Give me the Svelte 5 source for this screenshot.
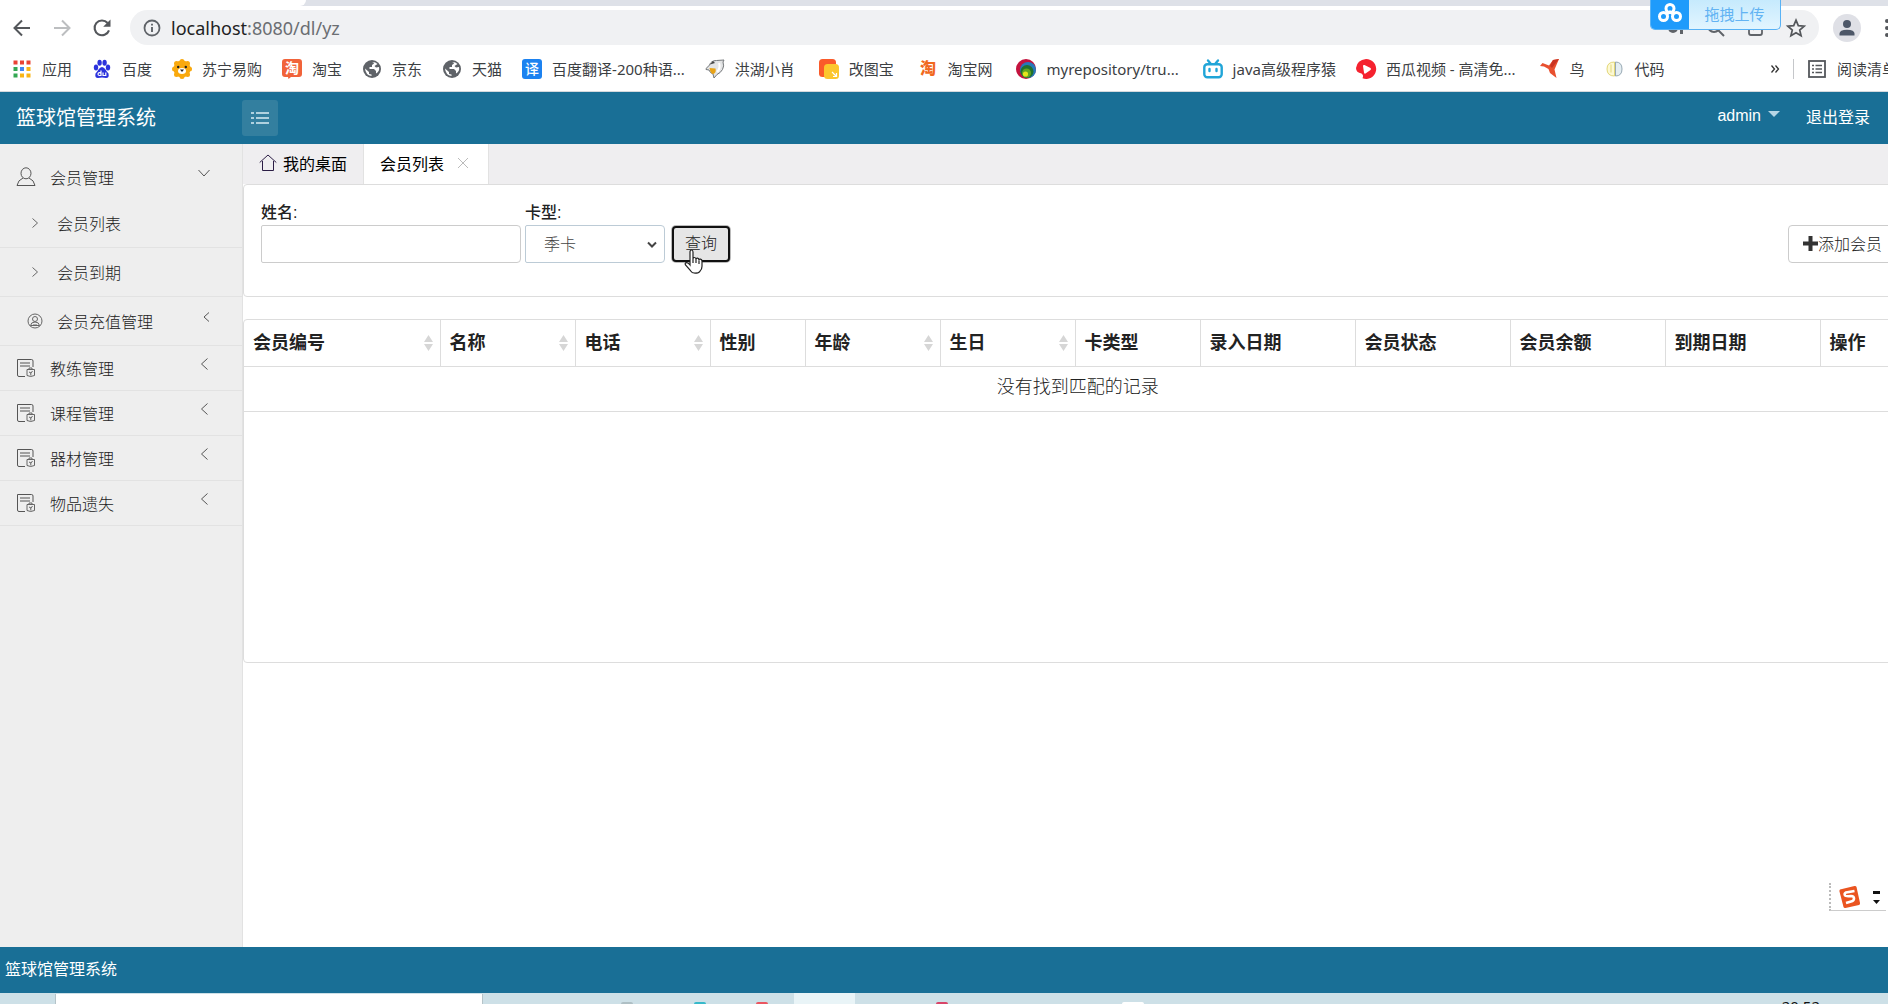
<script>
  let name = '';
  let cardType = '季卡';
  let openMenu = true;

  const cardTypes = ['季卡', '月卡', '年卡'];

  // trailing blanks are part of the saved bookmark titles
  const bookmarks = [
    { icon: 'apps', title: '应用' },
    { icon: 'baidu', title: '百度' },
    { icon: 'suning', title: '苏宁易购' },
    { icon: 'taobao', title: '淘宝' },
    { icon: 'globe', title: '京东' },
    { icon: 'globe', title: '天猫' },
    { icon: 'fanyi', title: '百度翻译-200种语...' },
    { icon: 'dolphin', title: '洪湖小肖 ' },
    { icon: 'gaitu', title: '改图宝 ' },
    { icon: 'tao', title: '淘宝网 ' },
    { icon: 'svn', title: 'myrepository/tru... ' },
    { icon: 'bili', title: 'java高级程序猿' },
    { icon: 'xigua', title: '西瓜视频 - 高清免... ' },
    { icon: 'bird', title: '鸟' },
    { icon: 'brain', title: '代码' }
  ];

  const subMenus = [
    { title: '会员列表', icon: 'arrow' },
    { title: '会员到期', icon: 'arrow' },
    { title: '会员充值管理', icon: 'user', children: true }
  ];

  const menus = ['教练管理', '课程管理', '器材管理', '物品遗失'];

  const columns = [
    { title: '会员编号', sortable: true, size: 'id' },
    { title: '名称', sortable: true, size: 'md' },
    { title: '电话', sortable: true, size: 'md' },
    { title: '性别', size: 'sm' },
    { title: '年龄', sortable: true, size: 'md' },
    { title: '生日', sortable: true, size: 'md' },
    { title: '卡类型', size: 'card' },
    { title: '录入日期', size: 'lg' },
    { title: '会员状态', size: 'lg' },
    { title: '会员余额', size: 'lg' },
    { title: '到期日期', size: 'lg' },
    { title: '操作', size: 'rest' }
  ];
</script>

<div class="screen">
  <!-- Browser chrome -->
  <div class="browser">
    <div class="tab-strip"><div class="tab-current"></div></div>
    <div class="toolbar">
      <button class="nav-btn" aria-label="后退">
        <svg width="20" height="20" viewBox="0 0 20 20" fill="none" stroke="#54575b" stroke-width="2"><path d="M18 10H3M10 2.5L2.5 10l7.5 7.5" /></svg>
      </button>
      <button class="nav-btn" aria-label="前进">
        <svg width="20" height="20" viewBox="0 0 20 20" fill="none" stroke="#bcbec0" stroke-width="2"><path d="M2 10h15M10 2.5l7.5 7.5-7.5 7.5" /></svg>
      </button>
      <button class="nav-btn" aria-label="刷新">
        <svg width="20" height="20" viewBox="0 0 20 20"><path d="M15.6 5A7.4 7.4 0 1 0 17 12.3" fill="none" stroke="#54575b" stroke-width="2.1" /><path d="M18.5 1.5v7.3h-7.3z" fill="#54575b" /></svg>
      </button>
      <div class="address">
        <svg width="18" height="18" viewBox="0 0 18 18"><circle cx="9" cy="9" r="7.5" fill="none" stroke="#5f6368" stroke-width="1.8" /><path d="M9 8v5M9 4.7v1.9" stroke="#5f6368" stroke-width="1.9" /></svg>
        <span class="url"><span class="host">localhost</span>:8080/dl/yz</span>
        <div class="address-icons">
          <svg width="20" height="20" viewBox="0 0 20 20" fill="#5f6368"><circle cx="7" cy="10" r="5" /><path d="M10 8h9v4h-2v4h-3v-4h-4z" /></svg>
          <svg width="20" height="20" viewBox="0 0 20 20" fill="none" stroke="#5f6368" stroke-width="2"><circle cx="8" cy="8" r="6" /><path d="M12 12l6 6" /></svg>
          <svg width="20" height="20" viewBox="0 0 20 20" fill="none" stroke="#5f6368" stroke-width="1.8"><path d="M3 9v6q0 2 2 2h9q2 0 2-2v-3M7 12q1-5 7-6" /></svg>
          <svg width="20" height="20" viewBox="0 0 20 20" fill="none" stroke="#54575b" stroke-width="1.7"><path d="M10 2.2l2.3 5.4 5.9.5-4.5 3.9 1.4 5.7-5.1-3-5.1 3 1.4-5.7-4.5-3.9 5.9-.5z" /></svg>
        </div>
      </div>
      <button class="profile" aria-label="用户">
        <svg width="28" height="28" viewBox="0 0 28 28"><circle cx="14" cy="14" r="14" fill="#dfe0e6" /><circle cx="14" cy="10" r="4" fill="#4d5768" /><path d="M6.5 21.500v-2q0-3.800 7.500-3.800t7.500 3.800v2z" fill="#4d5768" /></svg>
      </button>
      <button class="more" aria-label="更多">
        <svg width="4" height="18" viewBox="0 0 4 18" fill="#54575b"><circle cx="2" cy="2" r="2" /><circle cx="2" cy="9" r="2" /><circle cx="2" cy="16" r="2" /></svg>
      </button>
    </div>

    <div class="bookmarks">
      {#each bookmarks as mark}
        <a class="bookmark" href="#bookmark">
          <svg width="20" height="20" viewBox="0 0 20 20">
            {#if mark.icon === 'apps'}
              <g fill="#ea4335"><path d="M1.500 1.500h4v4h-4zM8 1.500h4v4h-4zM14.500 1.500h4v4h-4z" /></g>
              <path d="M1.500 8h4v4h-4zM1.500 14.500h4v4h-4z" fill="#34a853" />
              <path d="M8 8h4v4h-4z" fill="#4285f4" />
              <path d="M14.500 8h4v4h-4zM8 14.500h4v4h-4zM14.500 14.500h4v4h-4z" fill="#f9b515" />
            {:else if mark.icon === 'baidu'}
              <g fill="#2b32dc"><ellipse cx="4" cy="8.500" rx="2.200" ry="3" /><ellipse cx="7.600" cy="3.800" rx="2.200" ry="3" /><ellipse cx="12.600" cy="3.800" rx="2.200" ry="3" /><ellipse cx="16" cy="8.500" rx="2.200" ry="3" /><path d="M10 8q2 0 3.500 2.500t3 4Q17.500 19 14 19l-4-.5-4 .5q-3.500 0-2.500-4.500 1.500-1.500 3-4T10 8z" /></g>
              <path d="M9 11.500v5H7.200a1.500 1.500 0 1 1 1.800-1.500M11 13.500v3h2.800v-3" fill="none" stroke="#fff" stroke-width="1.200" />
            {:else if mark.icon === 'suning'}
              <g fill="#f9a90e"><circle cx="10" cy="10" r="8.500" /><circle cx="10" cy="2.500" r="2.500" /><circle cx="4.500" cy="4.500" r="2.500" /><circle cx="15.500" cy="4.500" r="2.500" /><circle cx="2.500" cy="10" r="2.500" /><circle cx="17.500" cy="10" r="2.500" /><circle cx="4.500" cy="15.500" r="2.500" /><circle cx="15.500" cy="15.500" r="2.500" /><circle cx="10" cy="17.500" r="2.500" /></g>
              <ellipse cx="10" cy="12" rx="4" ry="3" fill="#fff" /><circle cx="6.200" cy="8" r="1.200" fill="#222" /><circle cx="13.800" cy="8" r="1.200" fill="#222" /><path d="M8 10.500h4l-2 2.500z" fill="#222" />
            {:else if mark.icon === 'taobao'}
              <path d="M3 0h14q3 0 3 3v12q0 3-3 3H9l-2.500 2L6 18H3q-3 0-3-3V3q0-3 3-3z" fill="#f1633a" />
              <text x="3" y="14" font-size="14" font-weight="700" fill="#fff">淘</text>
            {:else if mark.icon === 'globe'}
              <circle cx="10" cy="10" r="9" fill="#5f6368" />
              <path d="M10 3q2 0 2 1.500L10 6v2H7.500v2H12l2 2v2.500Q18 12 17 8l-3 .5L12.500 7l3-2Q13 2.500 10 3zM3 9.500l4 3.500v2l2.500.5V17Q3.500 16 3 9.500z" fill="#fff" />
            {:else if mark.icon === 'fanyi'}
              <rect width="20" height="20" rx="3" fill="#1c82f0" />
              <text x="3" y="15" font-size="14" font-weight="500" fill="#fff">译</text>
            {:else if mark.icon === 'dolphin'}
              <path d="M1 9.500Q3 8 4.500 6q1.500-4.500 7-4.500L19 1l-1 2q1.500 4-.5 7.500t-5.500 5L9 19l-1-4q-3-1-4-4l-3-.5z" fill="#e3e4e5" stroke="#75787b" />
              <path d="M4.500 9l6 .5q1 4-2 5.500-3 0-4-6z" fill="#e8a317" /><path d="M5 5.500l5-1.500-2-2z" fill="#444" /><path d="M14 4q2 5-2 9" fill="none" stroke="#fff" stroke-width="2" />
            {:else if mark.icon === 'gaitu'}
              <rect width="17" height="18" rx="3.500" fill="#fa5a2a" /><rect x="5" y="5" width="15" height="15" rx="3.500" fill="#fcc62d" /><path d="M13 13l4.500 4.500M17.500 14v3.500H14" fill="none" stroke="#fff" stroke-width="1.200" />
            {:else if mark.icon === 'tao'}
              <text x="2" y="15" font-size="16" font-weight="900" fill="#f1691e">淘</text>
            {:else if mark.icon === 'svn'}
              <circle cx="10" cy="10" r="10" fill="#c4133e" /><circle cx="12" cy="11" r="8" fill="#2679bb" /><circle cx="11" cy="12.500" r="6.500" fill="#21712c" /><circle cx="10.500" cy="14" r="4.500" fill="#63a520" /><circle cx="9.500" cy="15" r="2.600" fill="#e5e51d" />
            {:else if mark.icon === 'bili'}
              <g fill="none" stroke="#20a5d8" stroke-width="2.400" stroke-linecap="round"><rect x="1.300" y="5.200" width="17.400" height="13" rx="3" /><path d="M5 1.500l2.500 3M15 1.500l-2.500 3M6.500 10v2M13.500 10v2" /></g>
            {:else if mark.icon === 'xigua'}
              <path d="M10 0a10 10 0 1 1-3.500 19.300q1.500-3-1-4.800Q0 13.500 0 9 1 1 10 0z" fill="#f5222f" /><path d="M7 7q0-1.500 1.500-1l6 3q1 1 0 2l-5 3.500q-1.500.5-1.500-1z" fill="#fff" />
            {:else if mark.icon === 'bird'}
              <path d="M0 7l2.500-3L9 6.500 13 1l6-1-4.500 10.500L16.500 19 10 14 8.500 10 4 7.500z" fill="#e8502f" /><path d="M10 7l3-6 6-1-7 9z" fill="#c93322" />
            {:else}
              <path d="M9.500 3Q2 3 2 10t7.500 7z" fill="#fdf9d4" stroke="#e3d779" /><path d="M10.500 3Q17 3 17 10t-6.500 7z" fill="#e5eef2" stroke="#98a9b4" /><path d="M6 5.500v8" stroke="#e3d779" />
            {/if}
          </svg>
          <span>{mark.title}</span>
        </a>
      {/each}
      <div class="bookmarks-end">
        <button class="overflow" aria-label="更多书签">
          <svg width="8" height="8" viewBox="0 0 8 8" fill="none" stroke="#333" stroke-width="1.300"><path d="M.5.5L3.500 4l-3 3.500M4.500.5L7.500 4l-3 3.500" /></svg>
        </button>
        <a class="bookmark reading" href="#reading">
          <svg width="20" height="20" viewBox="0 0 20 20" fill="none" stroke="#54575b"><rect x="2" y="2" width="16" height="16" stroke-width="1.800" /><path d="M5 6.500h2M5 10h2M5 13.500h2M8.500 6.500H15M8.500 10H15M8.500 13.500H15" stroke-width="1.600" /></svg>
          <span>阅读清单</span>
        </a>
      </div>
    </div>

    <button class="upload">
      <span class="upload-logo">
        <svg width="24" height="20" viewBox="0 0 24 20" fill="none" stroke="#fff" stroke-width="3"><circle cx="12" cy="5.500" r="4" /><circle cx="5.500" cy="13.500" r="4" /><circle cx="18.500" cy="13.500" r="4" /><path d="M8.500 11l3.500-2 3.500 2" /></svg>
      </span>
      <span class="upload-text">拖拽上传</span>
    </button>
  </div>

  <header class="header">
    <a class="brand" href="#home">篮球馆管理系统</a>
    <button class="toggle" aria-label="切换菜单">
      <svg width="20" height="14" viewBox="0 0 20 14" fill="none" stroke="#d9edf5"><path d="M1 2h3M6 2h13M1 7h3M6 7h13M1 12h3M6 12h13" stroke-width="1.400" /></svg>
    </button>
    <nav class="account">
      <a class="user" href="#admin">admin <span class="caret"></span></a>
      <a href="#logout">退出登录</a>
    </nav>
  </header>

  <div class="body">
    <aside class="sidebar">
      <button class="group first" on:click={() => (openMenu = !openMenu)}>
        <svg width="20" height="20" viewBox="0 0 20 20" fill="none" stroke="#555"><ellipse cx="10" cy="6.300" rx="5" ry="5.500" /><path d="M7 11q-5 2-6 7.500h18Q18 13 13 11" /></svg>
        <span>会员管理</span>
        <svg class="chevron" width="12" height="12" viewBox="0 0 12 12" fill="none" stroke="#555"><path d="M.5 3L6 9l5.500-6" /></svg>
      </button>
      {#if openMenu}
        {#each subMenus as item}
          <a class="sub" href="#sub">
            {#if item.icon === 'arrow'}
              <svg width="16" height="16" viewBox="0 0 16 16" fill="none" stroke="#666"><path d="M5.500 3.500L10.500 8l-5 4.500" /></svg>
            {:else}
              <svg width="16" height="16" viewBox="0 0 16 16" fill="none" stroke="#666"><circle cx="8" cy="8" r="7" /><circle cx="8" cy="6" r="2.500" /><path d="M3.500 12.500Q4 9 8 9t4.500 3.500zM6 12h4" /></svg>
            {/if}
            <span>{item.title}</span>
            {#if item.children}
              <svg class="chevron" width="12" height="12" viewBox="0 0 12 12" fill="none" stroke="#555"><path d="M9 1.500L4 6l5 4.500" /></svg>
            {/if}
          </a>
        {/each}
      {/if}
      {#each menus as title}
        <button class="group">
          <svg width="20" height="20" viewBox="0 0 20 20" fill="none" stroke="#555"><path d="M9 18.500H3q-1.500 0-1.500-1.500V1.500h14q1.500 0 1.500 1.500v6M4 5h10M4 8h10" /><path d="M11 11.500h7.500v6q-4 2-7.500 0zM13 11v-1h3v1M13 14l2 1 1.500-2M14.800 15v2.500" stroke-width=".9" /></svg>
          <span>{title}</span>
          <svg class="chevron" width="12" height="12" viewBox="0 0 12 12" fill="none" stroke="#555"><path d="M9.500.5L3.500 6l6 5.500" /></svg>
        </button>
      {/each}
    </aside>

    <main class="content">
      <div class="tabs">
        <button class="tab">
          <svg width="18" height="18" viewBox="0 0 18 18" fill="none" stroke="#2b1d45"><path d="M.7 8.500L9 1l8.300 7.500M3.500 7v9.500h11V7" /></svg>
          <span>我的桌面</span>
        </button>
        <button class="tab active">
          <span>会员列表</span>
          <svg width="12" height="12" viewBox="0 0 12 12" fill="none" stroke="#bbb"><path d="M1 1l10 10M11 1L1 11" /></svg>
        </button>
      </div>

      <div class="frame">
        <form class="search" on:submit|preventDefault>
          <div class="field name-field">
            <label for="name">姓名:</label>
            <input id="name" type="text" bind:value={name} />
          </div>
          <div class="field card-field">
            <label for="card">卡型:</label>
            <div class="select-box">
              <select id="card" bind:value={cardType}>
                {#each cardTypes as type}
                  <option value={type}>{type}</option>
                {/each}
              </select>
              <svg width="10" height="8" viewBox="0 0 10 8" fill="none" stroke="#444" stroke-width="2"><path d="M1 1.500l4 4 4-4" /></svg>
            </div>
          </div>
          <button class="query" type="submit">
            查询
            <svg class="cursor" width="20" height="26" viewBox="0 0 20 26" fill="#fff" stroke="#222" stroke-width="1.200"><path d="M6 14.500V3q0-2 1.500-2T9 3v7q0-1.500 1.500-1.500T12 10.500q0-1.500 1.500-1.300T15 11.200q0-1.200 1.500-1t1.500 2v5q0 3-2 5-1 2-5 2-3 0-4.500-2.500L1.500 16q-1-2 1-2.300Q4 13.500 6 16zM9 10v4M12 10.500V14M15 11.500V15" /></svg>
          </button>
          <button class="add" type="button">
            <svg width="15" height="16" viewBox="0 0 15 16"><path d="M5.500 1h4v5.500H15v4H9.500V16h-4v-5.500H0v-4h5.500z" fill="#333" /></svg>添加会员
          </button>
        </form>

        <div class="table-box">
          <table>
            <thead>
              <tr>
                {#each columns as col}
                  <th class={col.size}>
                    <div class="th-inner">
                      {col.title}
                      {#if col.sortable}
                        <svg width="9" height="16" viewBox="0 0 9 16" fill="#d6d6d6"><path d="M4.500 0L9 7H0zM0 9h9l-4.500 7z" /></svg>
                      {/if}
                    </div>
                  </th>
                {/each}
              </tr>
            </thead>
            <tbody>
              <tr>
                <td colspan={columns.length}>没有找到匹配的记录</td>
              </tr>
            </tbody>
          </table>
        </div>
      </div>
    </main>
  </div>

  <footer class="footer">篮球馆管理系统</footer>

  <div class="taskbar">
    <div class="task-search"></div>
    <div class="task-icons">
      <i class="gray"></i>
      <i class="cyan"></i>
      <i class="red"></i>
      <i class="window"></i>
      <i class="crimson"></i>
      <i class="white"></i>
    </div>
    <span class="clock">20:52</span>
  </div>

  <!-- Input method bar floating over the page -->
  <div class="ime">
    <svg width="22" height="24" viewBox="0 0 22 24"><path d="M1 4.500L15.500 1q1.500-.3 2 1L21 18q.3 1.500-1 2L6.500 23q-1.500.3-2-1L.5 6.500Q.3 5 1 4.500z" fill="#ea5420" /><path d="M15.500 6L7 7.500q-2 1-1 3 .5 1 6 .5 3 0 3 2.500t-3 3L7 18" fill="none" stroke="#fff" stroke-width="2.600" /></svg>
    <svg width="7" height="14" viewBox="0 0 7 14"><path d="M0 1h7v3H0zM0 10h7l-3.500 4z" fill="#111" /></svg>
  </div>
</div>

<style>
  :global(body) {
    margin: 0;
    overflow: hidden;
  }

  .screen {
    position: relative;
    display: flex;
    flex-direction: column;
    min-height: 100vh;
    overflow: hidden;
    background: #fff;
    color: #333;
    font-family: "Liberation Sans", "Noto Sans CJK SC", sans-serif;
    font-size: 16px;
    font-weight: 400;
  }

  * {
    box-sizing: border-box;
  }

  button, input, select {
    font: inherit;
    color: inherit;
    margin: 0;
  }

  button {
    padding: 0;
    border: 0;
    background: none;
    cursor: pointer;
  }

  a {
    color: inherit;
    text-decoration: none;
  }

  svg {
    display: block;
    flex-shrink: 0;
    overflow: visible;
  }

  /* Browser */
  .browser {
    position: relative;
    font-family: "Noto Sans", "Noto Sans CJK SC", sans-serif;
    border-bottom: 1px solid #d5d9dd;
  }

  .tab-strip {
    height: 6px;
    background: #dee1e8;
  }

  .tab-current {
    width: 306px;
    height: 6px;
    background: #fff;
    border-bottom-right-radius: 6px;
  }

  .toolbar {
    display: flex;
    align-items: center;
    gap: 20px;
    height: 45px;
    padding: 4px 0 6px 12px;
    margin-right: -1px;
  }

  .address {
    flex: 1;
    display: flex;
    align-items: center;
    gap: 10px;
    height: 35px;
    margin-left: -2px;
    padding: 0 13px;
    border-radius: 18px;
    background: #f0f1f3;
  }

  .url {
    font-size: 18px;
    color: #6b6e72;
  }

  .host {
    color: #222;
  }

  .address-icons {
    display: flex;
    gap: 20px;
    margin-left: auto;
  }

  .profile {
    margin-left: -6px;
  }

  .more {
    margin-left: 4px;
  }

  .bookmarks {
    display: flex;
    align-items: center;
    gap: 20px;
    height: 40px;
    padding: 0 0 4px 12px;
  }

  .bookmark {
    display: flex;
    align-items: center;
    gap: 10px;
    font-size: 15px;
    line-height: 20px;
    color: #3c4043;
    white-space: pre;
  }

  .bookmarks-end {
    display: flex;
    align-items: center;
    gap: 14px;
    margin-left: auto;
    margin-right: -9px;
  }

  .reading {
    padding-left: 13px;
    border-left: 1px solid #c5c7ca;
  }

  .upload {
    position: absolute;
    top: 0;
    right: 107px;
    display: flex;
    width: 131px;
    height: 30px;
    border: 1px solid #58b2f5;
    border-top: 0;
    border-radius: 0 0 5px 5px;
    background: linear-gradient(#c6eafd, #e2f5ff);
    overflow: hidden;
  }

  .upload-logo {
    display: flex;
    align-items: center;
    justify-content: center;
    width: 38px;
    height: 30px;
    background: #1e9bfb;
    padding-bottom: 4px;
  }

  .upload-text {
    flex: 1;
    font-size: 15px;
    line-height: 28px;
    color: #62b3f3;
  }

  /* Header */
  .header {
    display: flex;
    align-items: center;
    height: 52px;
    padding: 0 18px 0 16px;
    background: #196f96;
    color: #fff;
  }

  .brand {
    width: 226px;
    padding-bottom: 4px;
    font-size: 20px;
  }

  .toggle {
    display: flex;
    align-items: center;
    justify-content: center;
    width: 36px;
    height: 36px;
    border-radius: 3px;
    background: #337f9f;
  }

  .account {
    display: flex;
    gap: 26px;
    margin-left: auto;
    padding-bottom: 4px;
  }

  .user {
    display: flex;
    align-items: center;
    gap: 7px;
  }

  .caret {
    border: 6px solid transparent;
    border-top-color: #b5d6e6;
    border-bottom: 0;
    margin-bottom: 4px;
  }

  /* Sidebar */
  .body {
    flex: 1;
    display: flex;
    color: #222;
    font-weight: 300;
  }

  .sidebar {
    flex: 0 0 243px;
    background: #eee;
    border-right: 1px solid #e2e2e2;
  }

  .group, .sub {
    display: flex;
    align-items: center;
    width: 100%;
    border-bottom: 1px solid #e2e2e2;
    text-align: left;
  }

  .group {
    gap: 14px;
    height: 45px;
    padding: 0 32px 0 16px;
  }

  .first {
    height: 55px;
    padding-top: 10px;
    border-bottom: 0;
  }

  .sub {
    gap: 14px;
    height: 49px;
    padding: 0 30px 0 27px;
  }

  .chevron {
    margin-left: auto;
    margin-bottom: 8px;
  }

  /* Content */
  .content {
    flex: 1;
    min-width: 0;
  }

  .tabs {
    display: flex;
    height: 40px;
    background: #efeef0;
    font-weight: 400;
  }

  .tab {
    display: flex;
    align-items: center;
    gap: 6px;
    padding: 0 16px 2px;
    color: #000;
    border-right: 1px solid #e2e2e2;
  }

  .active {
    gap: 13px;
    padding-right: 19px;
    background: #fff;
  }

  /* the framed page is a little wider than the window */
  .frame {
    margin-right: -25px;
  }

  .search {
    display: flex;
    align-items: flex-end;
    height: 113px;
    padding: 0 15px 33px 17px;
    border: 1px solid #ddd;
    border-radius: 4px;
  }

  .field label {
    display: block;
    line-height: 24px;
    font-weight: 500;
  }

  .name-field {
    width: 260px;
    margin-right: 4px;
  }

  .card-field {
    width: 140px;
    margin-right: 7px;
  }

  .field input, .field select {
    display: block;
    width: 100%;
    height: 38px;
    padding: 0 12px;
    border: 1px solid #ccc;
    border-radius: 2px 4px 4px 2px;
    background: #fff;
  }

  .select-box {
    position: relative;
  }

  .field select {
    appearance: none;
    padding: 0 18px;
    border-color: #bccbd6;
    color: #444;
  }

  .select-box svg {
    position: absolute;
    right: 8px;
    top: 16px;
    pointer-events: none;
  }

  .query {
    position: relative;
    width: 58px;
    height: 36px;
    margin-bottom: 1px;
    padding-bottom: 5px;
    border: 2px solid #111;
    border-radius: 4px;
    background: #e6e6e6;
    box-shadow: 0 0 0 1px #bbb;
  }

  .cursor {
    position: absolute;
    left: 10px;
    top: 21px;
  }

  .add {
    display: flex;
    align-items: center;
    height: 38px;
    margin-left: auto;
    padding: 0 14px 3px;
    border: 1px solid #ccc;
    border-radius: 4px;
  }

  .table-box {
    min-height: 344px;
    margin-top: 22px;
    border: 1px solid #ddd;
    border-radius: 4px;
  }

  table {
    width: 100%;
    table-layout: fixed;
    border-collapse: collapse;
    font-size: 18px;
  }

  th, td {
    padding: 0 9px;
    border-bottom: 1px solid #ddd;
    line-height: 24px;
  }

  th {
    height: 46px;
    border-right: 1px solid #ddd;
    font-weight: 700;
    text-align: left;
  }

  td {
    height: 45px;
    padding-bottom: 3px;
    text-align: center;
  }

  .th-inner {
    display: flex;
    align-items: center;
    justify-content: space-between;
    margin-right: -2px;
  }

  .id { width: 196px; }
  .md { width: 135px; }
  .sm { width: 95px; }
  .card { width: 125px; }
  .lg { width: 155px; }
  .rest { width: auto; }

  /* Footer and task bar */
  .footer {
    height: 46px;
    padding-left: 5px;
    background: #196f96;
    color: #fff;
    line-height: 46px;
  }

  .taskbar {
    display: flex;
    height: 11px;
    padding: 0 68px 0 55px;
    background: #cde0e7;
    overflow: hidden;
  }

  .task-search {
    width: 428px;
    margin-top: 1px;
    background: #fff;
    border: 1px solid #b5c3c8;
    border-width: 0 1px;
  }

  .task-icons {
    display: flex;
    align-items: flex-end;
    gap: 50px;
    margin-left: 138px;
  }

  .task-icons i {
    width: 12px;
    height: 2px;
    border-radius: 6px 6px 0 0;
  }

  .gray { background: #aebfc4; }
  .red { background: #ea5560; }
  .crimson { background: #d84468; }

  .task-icons .cyan {
    margin-left: 11px;
    background: #36b9ca;
  }

  .task-icons .window {
    width: 61px;
    height: 11px;
    margin: 0 31px 0 -24px;
    border-radius: 0;
    background: #e9f4f7;
  }

  .task-icons .white {
    width: 22px;
    margin-left: 124px;
    background: #fff;
  }

  .clock {
    margin-left: auto;
    padding-top: 3px;
    font-family: "Noto Sans", sans-serif;
    font-size: 15px;
    line-height: 20px;
    color: #111;
  }

  .ime {
    position: absolute;
    right: 2px;
    bottom: 93px;
    display: flex;
    align-items: center;
    justify-content: space-between;
    width: 57px;
    height: 28px;
    padding: 0 6px 0 8px;
    border-left: 2px dotted #bbb;
    border-bottom: 1px solid #ccc;
  }
</style>
